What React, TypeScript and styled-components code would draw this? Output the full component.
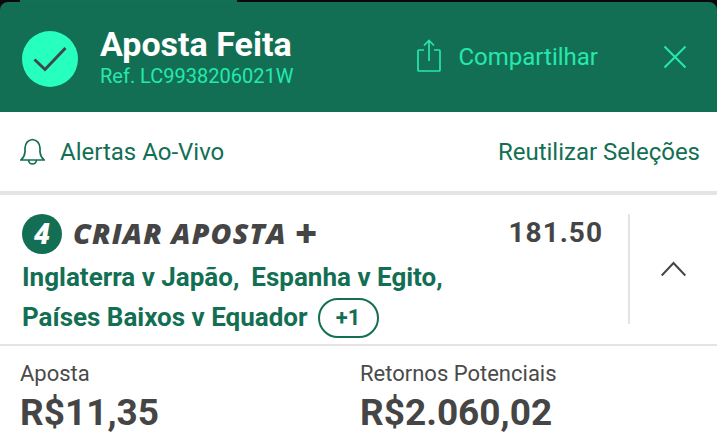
import React from 'react';
import styled, { createGlobalStyle } from 'styled-components';

const Global = createGlobalStyle`
    html, body {
        margin: 0;
        padding: 0;
        background: #ffffff;
    }
    body {
        width: 717px;
        height: 438px;
        overflow: hidden;
        font-family: Roboto, 'Liberation Sans', sans-serif;
    }
`;

const Screen = styled.div`
    width: 717px;
    height: 438px;
    overflow: hidden;
    background: #ffffff;
    display: flex;
    flex-direction: column;
`;

const TopStrip = styled.div`
    height: 2px;
    background: #0a0a0a;
    padding-left: 20px;
    flex: none;
`;

const Progress = styled.div`
    width: 217px;
    height: 2px;
    background: #127153;
`;

const HeaderBack = styled.div`
    background: #0a0a0a;
    flex: none;
`;

const Header = styled.div`
    height: 110px;
    background: #136f54;
    border-radius: 8px 8px 0 0;
    display: flex;
    align-items: center;
    padding: 0 22px;
`;

const CheckBadge = styled.div`
    width: 56px;
    height: 56px;
    border-radius: 50%;
    background: #26ffbe;
    display: flex;
    align-items: center;
    justify-content: center;
    flex: none;
    margin-top: 4px;
`;

const HeaderText = styled.div`
    margin-left: 22px;
    flex: 1;
    display: flex;
    flex-direction: column;
    margin-top: -1px;
`;

const Title = styled.div`
    color: #ffffff;
    font-size: 34px;
    line-height: 38px;
    font-weight: 700;
`;

const Ref = styled.div`
    color: #26e8ae;
    font-size: 20px;
    line-height: 24px;
    margin-top: 1px;
`;

const ShareButton = styled.div`
    display: flex;
    align-items: center;
    gap: 17px;
    color: #26e8ae;
    font-size: 24px;
    margin-right: 65px;
`;

const ShareIcon = styled.svg`
    margin-top: -4px;
`;

const CloseButton = styled.div`
    display: flex;
    margin-right: 8px;
`;

const ActionRow = styled.div`
    height: 79px;
    flex: none;
    display: flex;
    align-items: center;
    justify-content: space-between;
    padding: 0 17px 0 20px;
    color: #136f54;
    font-size: 24px;
    border-bottom: 4px solid #e4e4e4;
`;

const AlertLabel = styled.div`
    display: flex;
    align-items: center;
    gap: 15px;
`;

const BetRow = styled.div`
    height: 151px;
    flex: none;
    display: flex;
    box-sizing: border-box;
    border-bottom: 2px solid #e4e4e4;
    padding: 19px 0 21px 22px;
`;

const BetMain = styled.div`
    flex: 1;
    min-width: 0;
    display: flex;
    flex-direction: column;
`;

const BetTitleRow = styled.div`
    display: flex;
    align-items: center;
    height: 40px;
    padding-right: 26px;
`;

const CountBadge = styled.div`
    width: 40px;
    height: 40px;
    border-radius: 50%;
    background: #136f54;
    color: #ffffff;
    font-size: 29px;
    font-weight: 900;
    font-style: italic;
    display: flex;
    align-items: center;
    justify-content: center;
    flex: none;
`;

const BetBrand = styled.div`
    margin-left: 11px;
    color: #454545;
    font-family: 'Open Sans', Roboto, sans-serif;
    font-size: 28.5px;
    font-weight: 800;
    font-style: italic;
    letter-spacing: 1.1px;
    flex: 1;
    margin-top: -3px;
`;

const BrandPlus = styled.span`
    font-size: 38px;
    line-height: 0;
    letter-spacing: 0;
    vertical-align: -3px;
`;

const Odds = styled.div`
    color: #454545;
    font-size: 28px;
    font-weight: 700;
    letter-spacing: 1px;
    margin-right: -1px;
    margin-top: -3px;
`;

const Selections = styled.div`
    margin-top: 3px;
    color: #136f54;
    font-size: 26px;
    font-weight: 700;
    line-height: 40px;
`;

const SelectionLine = styled.div`
    display: flex;
    align-items: center;
    height: 40px;
`;

const Selection = styled.span`
    margin-right: 12px;
`;

const MoreChip = styled.span`
    box-sizing: border-box;
    width: 61px;
    height: 40px;
    border: 2px solid #136f54;
    border-radius: 20px;
    font-size: 22px;
    font-weight: 700;
    display: flex;
    align-items: center;
    justify-content: center;
    margin: 1px 0 0 -2px;
`;

const ChevronCell = styled.div`
    width: 89px;
    flex: none;
    height: 110px;
    border-left: 2px solid #e4e4e4;
    display: flex;
    align-items: center;
    justify-content: center;
    box-sizing: border-box;
`;

const Totals = styled.div`
    display: flex;
    padding: 14px 20px 0;
`;

const TotalCell = styled.div<{ width: number }>`
    width: ${(props) => props.width}px;
    flex: none;
    display: flex;
    flex-direction: column;
`;

const TotalLabel = styled.div`
    color: #4a4a4a;
    font-size: 22px;
    line-height: 28px;
`;

const TotalValue = styled.div`
    color: #454545;
    font-size: 37px;
    font-weight: 700;
    line-height: 44px;
    margin-top: 3px;
`;

export default function App() {
    return (
        <Screen>
            <Global />
            <TopStrip>
                <Progress />
            </TopStrip>
            <HeaderBack>
                <Header>
                    <CheckBadge>
                        <svg width="34" height="26" viewBox="0 0 34 26" fill="none" stroke="#3d4a47" strokeWidth="3">
                            <path d="M1.5 13.5 L12 23.5 L32.5 2" />
                        </svg>
                    </CheckBadge>
                    <HeaderText>
                        <Title>Aposta Feita</Title>
                        <Ref>Ref. LC9938206021W</Ref>
                    </HeaderText>
                    <ShareButton>
                        <ShareIcon width="25" height="33" viewBox="0 0 25 33" fill="none" stroke="#26e8ae" strokeWidth="1.7">
                            <path d="M8 11 H3 Q2 11 2 12 V31 Q2 32 3 32 H23 Q24 32 24 31 V12 Q24 11 23 11 H18" />
                            <path d="M13 22 V1.5 M8 6.5 L13 1.5 L18 6.5" />
                        </ShareIcon>
                        Compartilhar
                    </ShareButton>
                    <CloseButton>
                        <svg width="24" height="24" viewBox="0 0 24 24" fill="none" stroke="#26e8ae" strokeWidth="2">
                            <path d="M1.5 1.5 L22.5 22.5 M22.5 1.5 L1.5 22.5" />
                        </svg>
                    </CloseButton>
                </Header>
            </HeaderBack>
            <ActionRow>
                <AlertLabel>
                    <svg width="25" height="27" viewBox="0 0 25 27" fill="none" stroke="#136f54" strokeWidth="1.7">
                        <path d="M1 22 Q4.5 19 5 14 V10 Q5.5 2.5 12.5 1.5 Q19.5 2.5 20 10 V14 Q20.5 19 24 22 Z" />
                        <path d="M8.5 22 Q9 26 12.5 26 Q16 26 16.5 22" />
                    </svg>
                    Alertas Ao-Vivo
                </AlertLabel>
                <div>Reutilizar Seleções</div>
            </ActionRow>
            <BetRow>
                <BetMain>
                    <BetTitleRow>
                        <CountBadge>4</CountBadge>
                        <BetBrand>
                            CRIAR APOSTA <BrandPlus>+</BrandPlus>
                        </BetBrand>
                        <Odds>181.50</Odds>
                    </BetTitleRow>
                    <Selections>
                        <SelectionLine>
                            <Selection>Inglaterra v Japão,</Selection>
                            <Selection>Espanha v Egito,</Selection>
                        </SelectionLine>
                        <SelectionLine>
                            <Selection>Países Baixos v Equador</Selection>
                            <MoreChip>+1</MoreChip>
                        </SelectionLine>
                    </Selections>
                </BetMain>
                <ChevronCell>
                    <svg width="25" height="16" viewBox="0 0 25 16" fill="none" stroke="#454545" strokeWidth="2">
                        <path d="M0.7 14.5 L12.5 2 L24.3 14.5" />
                    </svg>
                </ChevronCell>
            </BetRow>
            <Totals>
                <TotalCell width={340}>
                    <TotalLabel>Aposta</TotalLabel>
                    <TotalValue>R$11,35</TotalValue>
                </TotalCell>
                <TotalCell width={337}>
                    <TotalLabel>Retornos Potenciais</TotalLabel>
                    <TotalValue>R$2.060,02</TotalValue>
                </TotalCell>
            </Totals>
        </Screen>
    );
}
